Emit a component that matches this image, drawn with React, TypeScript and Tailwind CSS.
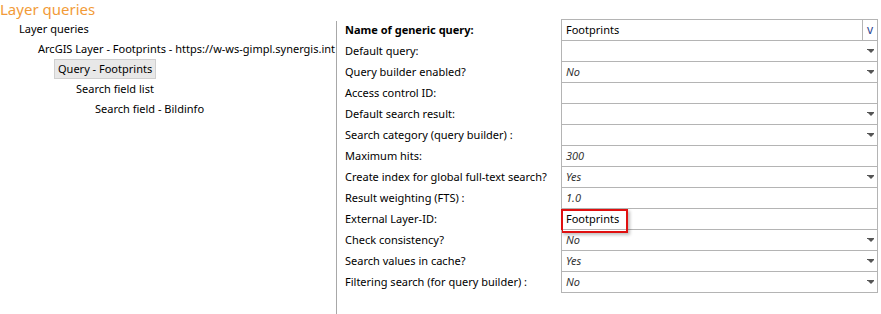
const tree = [
  { label: "Layer queries", indent: "pl-[19px]" },
  { label: "ArcGIS Layer - Footprints - https://w-ws-gimpl.synergis.int", indent: "pl-[38px]" },
  { label: "Query - Footprints", indent: "pl-[54px]", selected: true },
  { label: "Search field list", indent: "pl-[76px]" },
  { label: "Search field - Bildinfo", indent: "pl-[95px]" },
];

type Row = {
  label: string;
  value?: string;
  italic?: boolean;
  arrow?: boolean;
  bold?: boolean;
  button?: boolean;
  marked?: boolean;
};

const rows: Row[] = [
  { label: "Name of generic query:", value: "Footprints", bold: true, button: true },
  { label: "Default query:", arrow: true },
  { label: "Query builder enabled?", value: "No", italic: true, arrow: true },
  { label: "Access control ID:" },
  { label: "Default search result:", arrow: true },
  { label: "Search category (query builder) :", arrow: true },
  { label: "Maximum hits:", value: "300", italic: true },
  { label: "Create index for global full-text search?", value: "Yes", italic: true, arrow: true },
  { label: "Result weighting (FTS) :", value: "1.0", italic: true },
  { label: "External Layer-ID:", value: "Footprints", marked: true },
  { label: "Check consistency?", value: "No", italic: true, arrow: true },
  { label: "Search values in cache?", value: "Yes", italic: true, arrow: true },
  { label: "Filtering search (for query builder) :", value: "No", italic: true, arrow: true },
];

function Arrow() {
  return (
    <span className="ml-auto mr-[3px] flex flex-col items-center">
      <span className="h-px w-[7px] bg-[#555]" />
      <span className="h-0 w-0 border-l-[3px] border-r-[3px] border-t-[3px] border-l-transparent border-r-transparent border-t-[#555]" />
    </span>
  );
}

export default function App() {
  return (
    <div className="h-[314px] w-[881px] overflow-hidden whitespace-nowrap bg-white font-['Segoe_UI','Noto_Sans',sans-serif] text-[11px] text-black">
      <div className="h-[19px] text-[15px] leading-[19px] text-[#f29b38]">Layer queries</div>

      <div className="flex h-[295px]">
        <div className="mt-[2px] w-[337px] border-r border-[#a8a8a8]">
          <div className="-mt-[2px] flex flex-col">
            {tree.map((t) => (
              <div key={t.label} className={`flex h-[20px] items-center ${t.indent}`}>
                {t.selected ? (
                  <span className="border border-[#d0d0d0] bg-[#e8e8e8] px-[3px] leading-[18px]">{t.label}</span>
                ) : (
                  <span>{t.label}</span>
                )}
              </div>
            ))}
          </div>
        </div>

        <div className="flex flex-col">
          {rows.map((r, i) => (
            <div key={r.label} className={`flex ${i === 0 ? "h-[22px]" : "h-[21px]"}`}>
              <div className={`flex w-[224px] items-center pl-[8px] ${r.bold ? "font-bold" : ""}`}>{r.label}</div>
              <div
                className={`relative flex w-[317px] items-center border-x border-b border-[#b4b4b4] ${
                  i === 0 ? "border-t" : ""
                }`}
              >
                {r.value && (
                  <span className={`pl-[4px] ${r.italic ? "italic text-[#333]" : ""}`}>{r.value}</span>
                )}
                {r.marked && (
                  <span className="absolute left-[-1px] top-[0px] h-[24px] w-[67px] border-2 border-[#e01010] shadow-[2px_2px_3px_rgba(0,0,0,0.25)]" />
                )}
                {r.arrow && <Arrow />}
                {r.button && (
                  <span className="ml-auto flex h-full w-[15px] items-center justify-center border-l border-[#b4b4b4] text-[12px] text-[#2b3f8f]">
                    v
                  </span>
                )}
              </div>
            </div>
          ))}
        </div>
      </div>
    </div>
  );
}
